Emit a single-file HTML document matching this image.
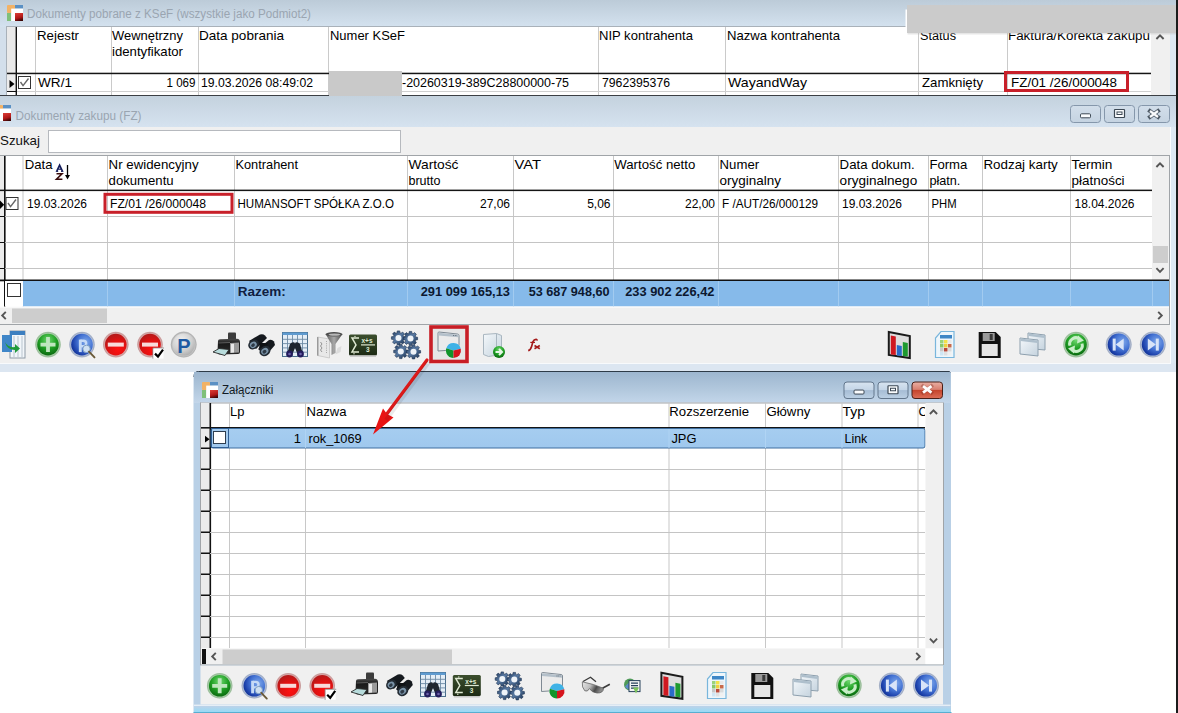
<!DOCTYPE html><html><head><meta charset="utf-8"><title>Dokumenty</title><style>html,body{margin:0;padding:0;background:#fff;overflow:hidden}svg{display:block;font-family:"Liberation Sans",sans-serif}</style></head><body><svg width="1178" height="713" viewBox="0 0 1178 713" font-family="Liberation Sans, sans-serif"><defs><linearGradient id="tb1" x1="0" y1="0" x2="0" y2="1"><stop offset="0" stop-color="#bccbd8"/><stop offset="1" stop-color="#d4e2ef"/></linearGradient><linearGradient id="tb2" x1="0" y1="0" x2="0" y2="1"><stop offset="0" stop-color="#c4d2de"/><stop offset="1" stop-color="#d6e3f0"/></linearGradient><linearGradient id="dlgtb" x1="0" y1="0" x2="0" y2="1"><stop offset="0" stop-color="#9db6cf"/><stop offset="0.6" stop-color="#b3c9de"/><stop offset="1" stop-color="#c3d6ea"/></linearGradient><linearGradient id="btni" x1="0" y1="0" x2="0" y2="1"><stop offset="0" stop-color="#d2deea"/><stop offset="1" stop-color="#c5d3e1"/></linearGradient><linearGradient id="btnd" x1="0" y1="0" x2="0" y2="1"><stop offset="0" stop-color="#d8e4f0"/><stop offset="0.48" stop-color="#c4d5e7"/><stop offset="0.52" stop-color="#a6bdd5"/><stop offset="1" stop-color="#bcd0e4"/></linearGradient><linearGradient id="close" x1="0" y1="0" x2="0" y2="1"><stop offset="0" stop-color="#eab0a4"/><stop offset="0.45" stop-color="#d88070"/><stop offset="0.5" stop-color="#c5442c"/><stop offset="1" stop-color="#dc6f58"/></linearGradient><linearGradient id="dlgbot" x1="0" y1="0" x2="0" y2="1"><stop offset="0" stop-color="#bdd2e8"/><stop offset="1" stop-color="#98daf6"/></linearGradient><linearGradient id="sel" x1="0" y1="0" x2="0" y2="1"><stop offset="0" stop-color="#a6cdf0"/><stop offset="1" stop-color="#9fc8ee"/></linearGradient><clipPath id="clipC"><rect x="900" y="400" width="25" height="30"/></clipPath>
<radialGradient id="gGreen" cx="0.5" cy="0.3" r="0.7"><stop offset="0" stop-color="#6fd86f"/><stop offset="0.55" stop-color="#1f9f24"/><stop offset="1" stop-color="#0b6a10"/></radialGradient>
<radialGradient id="gBlue" cx="0.68" cy="0.38" r="0.78"><stop offset="0" stop-color="#7fa8ea"/><stop offset="0.45" stop-color="#4574d4"/><stop offset="0.8" stop-color="#1c40aa"/><stop offset="1" stop-color="#0b2a86"/></radialGradient>
<radialGradient id="gRed" cx="0.6" cy="0.72" r="0.8"><stop offset="0" stop-color="#ff1010"/><stop offset="0.55" stop-color="#dc1212"/><stop offset="1" stop-color="#a81c1c"/></radialGradient>
<radialGradient id="gGray" cx="0.4" cy="0.3" r="0.8"><stop offset="0" stop-color="#f0f0f0"/><stop offset="0.6" stop-color="#cfcfcf"/><stop offset="1" stop-color="#a5a5a5"/></radialGradient>
<linearGradient id="gRing" x1="0" y1="0" x2="0" y2="1"><stop offset="0" stop-color="#d6d6d6"/><stop offset="1" stop-color="#a8a8a8"/></linearGradient>
<linearGradient id="gBlack" x1="0" y1="0" x2="0" y2="1"><stop offset="0" stop-color="#5a5a5a"/><stop offset="1" stop-color="#0c0c0c"/></linearGradient>
<linearGradient id="gPale" x1="0" y1="0" x2="1" y2="1"><stop offset="0" stop-color="#f4f8fb"/><stop offset="1" stop-color="#c5d3de"/></linearGradient>
<linearGradient id="gSigma" x1="0" y1="0" x2="0" y2="1"><stop offset="0" stop-color="#3c4f2e"/><stop offset="1" stop-color="#1c2a14"/></linearGradient>
<linearGradient id="gSteel" x1="0" y1="0" x2="1" y2="1"><stop offset="0" stop-color="#1d3558"/><stop offset="0.45" stop-color="#5a7ba4"/><stop offset="1" stop-color="#183050"/></linearGradient>
<linearGradient id="gAppRed" x1="0.3" y1="0" x2="0.6" y2="1"><stop offset="0" stop-color="#d83a34"/><stop offset="0.6" stop-color="#b01818"/><stop offset="1" stop-color="#3a0505"/></linearGradient>
<linearGradient id="gPrn" x1="0" y1="0" x2="0" y2="1"><stop offset="0" stop-color="#4a4a4a"/><stop offset="0.3" stop-color="#1a1a1a"/><stop offset="1" stop-color="#2a2a2a"/></linearGradient>
<linearGradient id="gGlass" x1="0" y1="0" x2="1" y2="0.3"><stop offset="0" stop-color="#e6e6e6"/><stop offset="0.45" stop-color="#bdbdbd"/><stop offset="0.75" stop-color="#4a4a4a"/><stop offset="1" stop-color="#8a8a8a"/></linearGradient>
<linearGradient id="gFun" x1="0" y1="0" x2="1" y2="0"><stop offset="0" stop-color="#5a5a5a"/><stop offset="0.5" stop-color="#a8a8a8"/><stop offset="1" stop-color="#4a4a4a"/></linearGradient>
</defs><rect x="0" y="0" width="1178" height="713" fill="#ffffff" />
<rect x="0" y="0" width="1178" height="96" fill="#d3dfeb" />
<rect x="0" y="0" width="1178" height="27" fill="url(#tb1)" />
<g transform="translate(7,5) scale(1.0)"><rect x="0" y="0" width="8" height="8" rx="1" fill="#f2b266"/><rect x="8" y="0" width="8" height="3.6" fill="#5a90c4"/><rect x="0" y="8" width="4.2" height="8" fill="#7fc07a"/><rect x="4.2" y="3.6" width="11.8" height="12.4" fill="#ffffff"/><rect x="8" y="8" width="8" height="8" fill="url(#gAppRed)"/></g>
<text x="27" y="18" font-size="12" fill="#9aa5b1" font-weight="normal" text-anchor="start" textLength="284" lengthAdjust="spacingAndGlyphs" >Dokumenty pobrane z KSeF (wszystkie jako Podmiot2)</text>
<rect x="6" y="26" width="1164" height="69" fill="#ffffff" />
<rect x="6" y="26" width="1164" height="1" fill="#a9b1b9" />
<rect x="6" y="26" width="1" height="69" fill="#a9b1b9" />
<rect x="7" y="27" width="9" height="46" fill="#e9e9e9" />
<rect x="7" y="74" width="9" height="17" fill="#ececec" />
<rect x="15.6" y="27" width="1.4" height="68" fill="#111" />
<rect x="35" y="27" width="1" height="68" fill="#cacaca" />
<rect x="111" y="27" width="1" height="68" fill="#cacaca" />
<rect x="198" y="27" width="1" height="68" fill="#cacaca" />
<rect x="328" y="27" width="1" height="68" fill="#cacaca" />
<rect x="598" y="27" width="1" height="68" fill="#cacaca" />
<rect x="725" y="27" width="1" height="68" fill="#cacaca" />
<rect x="918" y="27" width="1" height="68" fill="#cacaca" />
<rect x="1007" y="27" width="1" height="68" fill="#cacaca" />
<rect x="7" y="72.7" width="1144" height="1.5" fill="#151515" />
<rect x="17" y="91" width="1134" height="1" fill="#cfcfcf" />
<rect x="7" y="91" width="9" height="1" fill="#111" />
<rect x="1151" y="27" width="19" height="68" fill="#f0f0f0" />
<path d="M1156.4 39 L1160 35.4 L1163.6 39" fill="none" stroke="#555" stroke-width="1.9"/>
<rect x="0" y="95" width="1176" height="1" fill="#3b3f44" />
<rect x="1170" y="27" width="6" height="68" fill="#dde8f2" />
<path d="M9.5 80 L14.5 84 L9.5 88 Z" fill="#000"/>
<rect x="18.5" y="76.5" width="12" height="12" fill="#fff" stroke="#333" stroke-width="1"/><path d="M20.5 82.0 L23.04 85.6 L28.5 78.5" fill="none" stroke="#666" stroke-width="1.4"/>
<text x="37" y="40" font-size="13" fill="#000" font-weight="normal" text-anchor="start" textLength="42" lengthAdjust="spacingAndGlyphs" >Rejestr</text>
<text x="112" y="40" font-size="13" fill="#000" font-weight="normal" text-anchor="start" textLength="71" lengthAdjust="spacingAndGlyphs" >Wewnętrzny</text>
<text x="112" y="56" font-size="13" fill="#000" font-weight="normal" text-anchor="start" textLength="71" lengthAdjust="spacingAndGlyphs" >identyfikator</text>
<text x="199" y="40" font-size="13" fill="#000" font-weight="normal" text-anchor="start" textLength="85" lengthAdjust="spacingAndGlyphs" >Data pobrania</text>
<text x="330" y="40" font-size="13" fill="#000" font-weight="normal" text-anchor="start" textLength="75" lengthAdjust="spacingAndGlyphs" >Numer KSeF</text>
<text x="599" y="40" font-size="13" fill="#000" font-weight="normal" text-anchor="start" textLength="94" lengthAdjust="spacingAndGlyphs" >NIP kontrahenta</text>
<text x="727" y="40" font-size="13" fill="#000" font-weight="normal" text-anchor="start" textLength="113" lengthAdjust="spacingAndGlyphs" >Nazwa kontrahenta</text>
<text x="920" y="40" font-size="13" fill="#000" font-weight="normal" text-anchor="start" textLength="36" lengthAdjust="spacingAndGlyphs" >Status</text>
<text x="1008" y="40" font-size="13" fill="#000" font-weight="normal" text-anchor="start" textLength="142" lengthAdjust="spacingAndGlyphs" >Faktura/Korekta zakupu</text>
<text x="38" y="87" font-size="13" fill="#000" font-weight="normal" text-anchor="start" textLength="34" lengthAdjust="spacingAndGlyphs" >WR/1</text>
<text x="195.5" y="87" font-size="12.5" fill="#000" font-weight="normal" text-anchor="end" textLength="29" lengthAdjust="spacingAndGlyphs" >1 069</text>
<text x="201" y="87" font-size="12.5" fill="#000" font-weight="normal" text-anchor="start" textLength="112" lengthAdjust="spacingAndGlyphs" >19.03.2026 08:49:02</text>
<text x="402" y="87" font-size="12.5" fill="#000" font-weight="normal" text-anchor="start" textLength="167" lengthAdjust="spacingAndGlyphs" >-20260319-389C28800000-75</text>
<text x="602" y="87" font-size="12.5" fill="#000" font-weight="normal" text-anchor="start" textLength="68" lengthAdjust="spacingAndGlyphs" >7962395376</text>
<text x="728" y="87" font-size="13" fill="#000" font-weight="normal" text-anchor="start" textLength="79" lengthAdjust="spacingAndGlyphs" >WayandWay</text>
<text x="922" y="87" font-size="13" fill="#000" font-weight="normal" text-anchor="start" textLength="61" lengthAdjust="spacingAndGlyphs" >Zamknięty</text>
<text x="1011" y="87" font-size="12.5" fill="#000" font-weight="normal" text-anchor="start" textLength="106" lengthAdjust="spacingAndGlyphs" >FZ/01 /26/000048</text>
<rect x="1005.5" y="72.5" width="122" height="18" fill="none" stroke="#c8202a" stroke-width="3"/>
<rect x="329" y="71" width="73" height="25" fill="#c9c9c9" />
<rect x="907.5" y="6" width="270" height="28.5" fill="#b8b8b8" opacity="0.35"/>
<rect x="905.5" y="9.5" width="1.6" height="21.5" fill="#ffffff" />
<rect x="907" y="5" width="269.5" height="28" fill="#cbcbcb" />
<rect x="0" y="96" width="1178" height="276" fill="#d6e2ee" />
<rect x="0" y="96" width="1178" height="32" fill="url(#tb2)" />
<g transform="translate(-5,105) scale(1.0)"><rect x="0" y="0" width="8" height="8" rx="1" fill="#f2b266"/><rect x="8" y="0" width="8" height="3.6" fill="#5a90c4"/><rect x="0" y="8" width="4.2" height="8" fill="#7fc07a"/><rect x="4.2" y="3.6" width="11.8" height="12.4" fill="#ffffff"/><rect x="8" y="8" width="8" height="8" fill="url(#gAppRed)"/></g>
<text x="15.5" y="119.5" font-size="12" fill="#9aa5b1" font-weight="normal" text-anchor="start" textLength="126" lengthAdjust="spacingAndGlyphs" >Dokumenty zakupu (FZ)</text>
<rect x="1070.5" y="105.5" width="30" height="17" rx="3" fill="url(#btni)" stroke="#8597ab" stroke-width="1"/>
<rect x="1080.5" y="113.8" width="10" height="4" rx="1" fill="#fafcfe" stroke="#3c4854" stroke-width="1"/>
<rect x="1104.5" y="105.5" width="30" height="17" rx="3" fill="url(#btni)" stroke="#8597ab" stroke-width="1"/>
<rect x="1114.5" y="109.5" width="10" height="8" rx="0.5" fill="#fafcfe" stroke="#3c4854" stroke-width="1.2"/>
<rect x="1117.0" y="112.0" width="5" height="2.5" fill="#fafcfe" stroke="#3c4854" stroke-width="1"/>
<rect x="1138.5" y="105.5" width="31" height="17" rx="3" fill="url(#btni)" stroke="#8597ab" stroke-width="1"/>
<path d="M1150.0 111.0 L1158.0 117.0 M1158.0 111.0 L1150.0 117.0" stroke="#4e5a66" stroke-width="4" stroke-linecap="square"/>
<path d="M1150.0 111.0 L1158.0 117.0 M1158.0 111.0 L1150.0 117.0" stroke="#fbfcfd" stroke-width="2.2" stroke-linecap="butt"/>
<rect x="0" y="127" width="1170" height="237" fill="#f0f0f0" />
<rect x="1170" y="127" width="1" height="236" fill="#fafcfe" />
<rect x="1171" y="127" width="5" height="245" fill="#dde8f2" />
<text x="0" y="145" font-size="13.3" fill="#111" font-weight="normal" text-anchor="start" textLength="40" lengthAdjust="spacingAndGlyphs" >Szukaj</text>
<rect x="48.5" y="130.5" width="352" height="22" fill="#fff" stroke="#b6b9be"/>
<rect x="0" y="155" width="1170" height="152" fill="#ffffff" />
<rect x="0" y="155" width="1170" height="1" fill="#a0a4a8" />
<rect x="1169" y="155" width="1" height="169" fill="#a0a4a8" />
<rect x="0" y="156" width="4" height="124" fill="#ebebeb" />
<rect x="4" y="156" width="1.6" height="151" fill="#111" />
<rect x="22.5" y="156" width="1" height="151" fill="#c8c8c8" />
<rect x="107.0" y="156" width="1" height="151" fill="#c8c8c8" />
<rect x="234.0" y="156" width="1" height="151" fill="#c8c8c8" />
<rect x="407.0" y="156" width="1" height="151" fill="#c8c8c8" />
<rect x="513.0" y="156" width="1" height="151" fill="#c8c8c8" />
<rect x="613.0" y="156" width="1" height="151" fill="#c8c8c8" />
<rect x="718.0" y="156" width="1" height="151" fill="#c8c8c8" />
<rect x="838.0" y="156" width="1" height="151" fill="#c8c8c8" />
<rect x="928.0" y="156" width="1" height="151" fill="#c8c8c8" />
<rect x="982.0" y="156" width="1" height="151" fill="#c8c8c8" />
<rect x="1070.0" y="156" width="1" height="151" fill="#c8c8c8" />
<rect x="0" y="189.6" width="1152" height="1.5" fill="#151515" />
<rect x="5" y="216" width="1147" height="1" fill="#c4c4c4" />
<rect x="0" y="216" width="5" height="1" fill="#111" />
<rect x="5" y="242" width="1147" height="1" fill="#c4c4c4" />
<rect x="0" y="242" width="5" height="1" fill="#111" />
<rect x="5" y="268" width="1147" height="1" fill="#c4c4c4" />
<rect x="0" y="268" width="5" height="1" fill="#111" />
<rect x="1152" y="156" width="17" height="124" fill="#f0f0f0" />
<path d="M1156.4 167 L1160 163.4 L1163.6 167" fill="none" stroke="#555" stroke-width="1.9"/>
<rect x="1153" y="246" width="15" height="17" fill="#cdcdcd" />
<path d="M1156.4 268.2 L1160 271.8 L1163.6 268.2" fill="none" stroke="#555" stroke-width="1.9"/>
<rect x="0" y="279.5" width="1169" height="1.8" fill="#111" />
<rect x="23" y="281" width="1146" height="25.5" fill="#86baea" />
<rect x="5" y="281" width="18" height="25.5" fill="#ffffff" />
<rect x="107.0" y="281" width="1" height="25.5" fill="#a2cbf0" />
<rect x="234.0" y="281" width="1" height="25.5" fill="#a2cbf0" />
<rect x="407.0" y="281" width="1" height="25.5" fill="#a2cbf0" />
<rect x="513.0" y="281" width="1" height="25.5" fill="#a2cbf0" />
<rect x="613.0" y="281" width="1" height="25.5" fill="#a2cbf0" />
<rect x="718.0" y="281" width="1" height="25.5" fill="#a2cbf0" />
<rect x="838.0" y="281" width="1" height="25.5" fill="#a2cbf0" />
<rect x="928.0" y="281" width="1" height="25.5" fill="#a2cbf0" />
<rect x="982.0" y="281" width="1" height="25.5" fill="#a2cbf0" />
<rect x="1070.0" y="281" width="1" height="25.5" fill="#a2cbf0" />
<rect x="1152" y="281" width="1" height="25.5" fill="#a2cbf0" />
<rect x="7.5" y="283.5" width="13" height="13" fill="#fff" stroke="#333" stroke-width="1"/>
<path d="M0 200.5 L4.2 204.7 L0 208.9 Z" fill="#000"/>
<rect x="6.0" y="197.5" width="12" height="12" fill="#fff" stroke="#333" stroke-width="1"/><path d="M8.0 203.0 L10.54 206.6 L16.0 199.5" fill="none" stroke="#666" stroke-width="1.4"/>
<text x="27" y="207.5" font-size="12" fill="#000" font-weight="normal" text-anchor="start" textLength="60" lengthAdjust="spacingAndGlyphs" >19.03.2026</text>
<text x="110" y="207.5" font-size="12" fill="#000" font-weight="normal" text-anchor="start" textLength="96" lengthAdjust="spacingAndGlyphs" >FZ/01 /26/000048</text>
<text x="237.5" y="207.5" font-size="12" fill="#000" font-weight="normal" text-anchor="start" textLength="156.5" lengthAdjust="spacingAndGlyphs" >HUMANSOFT SPÓŁKA Z.O.O</text>
<text x="510" y="207.5" font-size="12" fill="#000" font-weight="normal" text-anchor="end" >27,06</text>
<text x="610.5" y="207.5" font-size="12" fill="#000" font-weight="normal" text-anchor="end" >5,06</text>
<text x="715" y="207.5" font-size="12" fill="#000" font-weight="normal" text-anchor="end" >22,00</text>
<text x="722" y="207.5" font-size="12" fill="#000" font-weight="normal" text-anchor="start" textLength="96" lengthAdjust="spacingAndGlyphs" >F /AUT/26/000129</text>
<text x="842" y="207.5" font-size="12" fill="#000" font-weight="normal" text-anchor="start" textLength="60" lengthAdjust="spacingAndGlyphs" >19.03.2026</text>
<text x="931.5" y="207.5" font-size="12" fill="#000" font-weight="normal" text-anchor="start" textLength="25" lengthAdjust="spacingAndGlyphs" >PHM</text>
<text x="1074.5" y="207.5" font-size="12" fill="#000" font-weight="normal" text-anchor="start" textLength="60" lengthAdjust="spacingAndGlyphs" >18.04.2026</text>
<rect x="105" y="194.3" width="127" height="18" fill="none" stroke="#c8202a" stroke-width="3"/>
<text x="24.7" y="169.2" font-size="13" fill="#000" font-weight="normal" text-anchor="start" textLength="27.8" lengthAdjust="spacingAndGlyphs" >Data</text>
<g transform="translate(0,0)"><path d="M56.8 171.2 L59.6 165.2 L62.4 171.2" fill="none" stroke="#141c5a" stroke-width="1.7"/><path d="M58.2 169.2 H61" stroke="#141c5a" stroke-width="1.2"/><path d="M55.8 171.4 H58.2 M61 171.4 H63.4" stroke="#141c5a" stroke-width="1"/><path d="M56.5 173.8 H62 L56.5 179.2 H62.4" fill="none" stroke="#3a0c0c" stroke-width="1.6"/><path d="M67.5 165 V176" stroke="#000" stroke-width="1.3"/><path d="M65 175 H70 L67.5 179.6 Z" fill="#000"/></g>
<text x="108.6" y="169.2" font-size="13" fill="#000" font-weight="normal" text-anchor="start" textLength="90" lengthAdjust="spacingAndGlyphs" >Nr ewidencyjny</text>
<text x="108.6" y="184.5" font-size="13" fill="#000" font-weight="normal" text-anchor="start" textLength="65" lengthAdjust="spacingAndGlyphs" >dokumentu</text>
<text x="235.5" y="169.2" font-size="13" fill="#000" font-weight="normal" text-anchor="start" textLength="62.5" lengthAdjust="spacingAndGlyphs" >Kontrahent</text>
<text x="408.5" y="169.2" font-size="13" fill="#000" font-weight="normal" text-anchor="start" textLength="50" lengthAdjust="spacingAndGlyphs" >Wartość</text>
<text x="408.5" y="184.5" font-size="13" fill="#000" font-weight="normal" text-anchor="start" textLength="32" lengthAdjust="spacingAndGlyphs" >brutto</text>
<text x="514.5" y="169.2" font-size="13" fill="#000" font-weight="normal" text-anchor="start" textLength="26.5" lengthAdjust="spacingAndGlyphs" >VAT</text>
<text x="614.3" y="169.2" font-size="13" fill="#000" font-weight="normal" text-anchor="start" textLength="81" lengthAdjust="spacingAndGlyphs" >Wartość netto</text>
<text x="719.6" y="169.2" font-size="13" fill="#000" font-weight="normal" text-anchor="start" textLength="39.5" lengthAdjust="spacingAndGlyphs" >Numer</text>
<text x="719.6" y="184.5" font-size="13" fill="#000" font-weight="normal" text-anchor="start" textLength="61.4" lengthAdjust="spacingAndGlyphs" >oryginalny</text>
<text x="839.6" y="169.2" font-size="13" fill="#000" font-weight="normal" text-anchor="start" textLength="75" lengthAdjust="spacingAndGlyphs" >Data dokum.</text>
<text x="839.6" y="184.5" font-size="13" fill="#000" font-weight="normal" text-anchor="start" textLength="77.6" lengthAdjust="spacingAndGlyphs" >oryginalnego</text>
<text x="929.4" y="169.2" font-size="13" fill="#000" font-weight="normal" text-anchor="start" textLength="38" lengthAdjust="spacingAndGlyphs" >Forma</text>
<text x="929.4" y="184.5" font-size="13" fill="#000" font-weight="normal" text-anchor="start" textLength="31" lengthAdjust="spacingAndGlyphs" >płatn.</text>
<text x="983.4" y="169.2" font-size="13" fill="#000" font-weight="normal" text-anchor="start" textLength="74.4" lengthAdjust="spacingAndGlyphs" >Rodzaj karty</text>
<text x="1071.6" y="169.2" font-size="13" fill="#000" font-weight="normal" text-anchor="start" textLength="40.8" lengthAdjust="spacingAndGlyphs" >Termin</text>
<text x="1071.6" y="184.5" font-size="13" fill="#000" font-weight="normal" text-anchor="start" textLength="53" lengthAdjust="spacingAndGlyphs" >płatności</text>
<text x="237.7" y="296" font-size="13" fill="#102040" font-weight="bold" text-anchor="start" textLength="48" lengthAdjust="spacingAndGlyphs" >Razem:</text>
<text x="510" y="296" font-size="13" fill="#0c1830" font-weight="bold" text-anchor="end" textLength="89.3" lengthAdjust="spacingAndGlyphs" >291 099 165,13</text>
<text x="609.5" y="296" font-size="13" fill="#0c1830" font-weight="bold" text-anchor="end" textLength="80.8" lengthAdjust="spacingAndGlyphs" >53 687 948,60</text>
<text x="714.5" y="296" font-size="13" fill="#0c1830" font-weight="bold" text-anchor="end" textLength="89.3" lengthAdjust="spacingAndGlyphs" >233 902 226,42</text>
<rect x="0" y="307" width="1169" height="17" fill="#f0f0f0" />
<rect x="0" y="306.5" width="1169" height="1.2" fill="#fbfbfb" />
<rect x="12" y="308.5" width="95" height="14.5" fill="#cdcdcd" />
<path d="M5.8 311.9 L2.2 315.5 L5.8 319.1" fill="none" stroke="#555" stroke-width="1.9"/>
<path d="M1158.2 311.9 L1161.8 315.5 L1158.2 319.1" fill="none" stroke="#555" stroke-width="1.9"/>
<rect x="0" y="324" width="1170" height="1" fill="#a0a4a8" />
<rect x="0" y="325" width="1170" height="38" fill="#f0f0f0" />
<rect x="0" y="363" width="1176" height="9" fill="#dce6f1" />
<rect x="0" y="363" width="1171" height="1" fill="#f8fafc" />
<path d="M193.5 713 L193.5 376 Q193.5 371 198.5 371 L949 371 L951 373 L951 713 Z" fill="#b9d0e6"/>
<path d="M194.0 377 Q194.0 371.5 198.5 371.5 L949.5 371.5 L950.5 372.5" fill="none" stroke="#2e3b48" stroke-width="1"/>
<rect x="194.0" y="372" width="756.5" height="31" fill="url(#dlgtb)" />
<g transform="translate(202,382) scale(1.0)"><rect x="0" y="0" width="8" height="8" rx="1" fill="#f2b266"/><rect x="8" y="0" width="8" height="3.6" fill="#5a90c4"/><rect x="0" y="8" width="4.2" height="8" fill="#7fc07a"/><rect x="4.2" y="3.6" width="11.8" height="12.4" fill="#ffffff"/><rect x="8" y="8" width="8" height="8" fill="url(#gAppRed)"/></g>
<text x="222" y="394.4" font-size="12" fill="#111a24" font-weight="normal" text-anchor="start" textLength="51.3" lengthAdjust="spacingAndGlyphs" >Załączniki</text>
<rect x="844.0" y="382.0" width="30" height="16.5" rx="3" fill="url(#btnd)" stroke="#62768c" stroke-width="1"/>
<rect x="854.0" y="390.05" width="10" height="4" rx="1" fill="#fafcfe" stroke="#3c4854" stroke-width="1"/>
<rect x="878.0" y="382.0" width="30" height="16.5" rx="3" fill="url(#btnd)" stroke="#62768c" stroke-width="1"/>
<rect x="888.0" y="385.75" width="10" height="8" rx="0.5" fill="#fafcfe" stroke="#3c4854" stroke-width="1.2"/>
<rect x="890.5" y="388.25" width="5" height="2.5" fill="#fafcfe" stroke="#3c4854" stroke-width="1"/>
<rect x="912.0" y="382.0" width="30.5" height="16.5" rx="3" fill="url(#close)" stroke="#4a2018" stroke-width="1"/>
<path d="M923.05 386.05 L931.45 392.65000000000003 M931.45 386.05 L923.05 392.65000000000003" stroke="#7a2a1e" stroke-width="3.6" stroke-linecap="square" opacity="0.35"/>
<path d="M923.05 386.05 L931.45 392.65000000000003 M931.45 386.05 L923.05 392.65000000000003" stroke="#fdfdfd" stroke-width="2.8" stroke-linecap="butt"/>
<rect x="200" y="402.5" width="743" height="262" fill="#ffffff" />
<rect x="200" y="402.5" width="743" height="1" fill="#a0a4a8" />
<rect x="200" y="402.5" width="1" height="262.5" fill="#a0a4a8" />
<rect x="201" y="403" width="9" height="245" fill="#ebebeb" />
<rect x="209.5" y="403" width="1.6" height="245" fill="#111" />
<rect x="229" y="403" width="1" height="245" fill="#c8c8c8" />
<rect x="305" y="403" width="1" height="245" fill="#c8c8c8" />
<rect x="668.5" y="403" width="1" height="245" fill="#c8c8c8" />
<rect x="765" y="403" width="1" height="245" fill="#c8c8c8" />
<rect x="841.5" y="403" width="1" height="245" fill="#c8c8c8" />
<rect x="917.5" y="403" width="1" height="245" fill="#c8c8c8" />
<rect x="201" y="427" width="724" height="1.6" fill="#151515" />
<rect x="211" y="428.5" width="714" height="19.5" rx="2" fill="url(#sel)" stroke="#3f6fa0" stroke-width="1"/>
<rect x="305" y="429" width="1" height="19" fill="#b0d4f4" />
<rect x="668.5" y="429" width="1" height="19" fill="#b0d4f4" />
<rect x="765" y="429" width="1" height="19" fill="#b0d4f4" />
<rect x="841.5" y="429" width="1" height="19" fill="#b0d4f4" />
<rect x="210" y="469" width="715" height="1" fill="#c4c4c4" />
<rect x="201" y="468.5" width="9" height="1.5" fill="#111" />
<rect x="210" y="490" width="715" height="1" fill="#c4c4c4" />
<rect x="201" y="489.5" width="9" height="1.5" fill="#111" />
<rect x="210" y="511" width="715" height="1" fill="#c4c4c4" />
<rect x="201" y="510.5" width="9" height="1.5" fill="#111" />
<rect x="210" y="532" width="715" height="1" fill="#c4c4c4" />
<rect x="201" y="531.5" width="9" height="1.5" fill="#111" />
<rect x="210" y="553" width="715" height="1" fill="#c4c4c4" />
<rect x="201" y="552.5" width="9" height="1.5" fill="#111" />
<rect x="210" y="574" width="715" height="1" fill="#c4c4c4" />
<rect x="201" y="573.5" width="9" height="1.5" fill="#111" />
<rect x="210" y="595" width="715" height="1" fill="#c4c4c4" />
<rect x="201" y="594.5" width="9" height="1.5" fill="#111" />
<rect x="210" y="616" width="715" height="1" fill="#c4c4c4" />
<rect x="201" y="615.5" width="9" height="1.5" fill="#111" />
<rect x="210" y="637" width="715" height="1" fill="#c4c4c4" />
<rect x="201" y="636.5" width="9" height="1.5" fill="#111" />
<rect x="201" y="447.5" width="9" height="1.5" fill="#111" />
<path d="M205 435.8 L209.6 439.2 L205 442.6 Z" fill="#000"/>
<rect x="211.5" y="428.5" width="17" height="19" fill="none" stroke="#2f5f96" stroke-width="1"/>
<rect x="213.5" y="431.5" width="12" height="12" fill="#fff" stroke="#2e3e50" stroke-width="1"/>
<text x="230" y="416" font-size="13" fill="#000" font-weight="normal" text-anchor="start" textLength="14.4" lengthAdjust="spacingAndGlyphs" >Lp</text>
<text x="306.5" y="416" font-size="13" fill="#000" font-weight="normal" text-anchor="start" textLength="40" lengthAdjust="spacingAndGlyphs" >Nazwa</text>
<text x="669.3" y="416" font-size="13" fill="#000" font-weight="normal" text-anchor="start" textLength="79.8" lengthAdjust="spacingAndGlyphs" >Rozszerzenie</text>
<text x="766.4" y="416" font-size="13" fill="#000" font-weight="normal" text-anchor="start" textLength="43.9" lengthAdjust="spacingAndGlyphs" >Główny</text>
<text x="842.5" y="416" font-size="13" fill="#000" font-weight="normal" text-anchor="start" textLength="22.4" lengthAdjust="spacingAndGlyphs" >Typ</text>
<text x="918.6" y="416" font-size="13" fill="#000" font-weight="normal" text-anchor="start" textLength="9" lengthAdjust="spacingAndGlyphs" clip-path="url(#clipC)">C</text>
<text x="301" y="442.6" font-size="13" fill="#000" font-weight="normal" text-anchor="end" >1</text>
<text x="308.4" y="442.6" font-size="13" fill="#000" font-weight="normal" text-anchor="start" textLength="53.3" lengthAdjust="spacingAndGlyphs" >rok_1069</text>
<text x="671.4" y="442.6" font-size="13" fill="#000" font-weight="normal" text-anchor="start" textLength="25.1" lengthAdjust="spacingAndGlyphs" >JPG</text>
<text x="844.6" y="442.6" font-size="13" fill="#000" font-weight="normal" text-anchor="start" textLength="22.7" lengthAdjust="spacingAndGlyphs" >Link</text>
<rect x="925.5" y="403" width="17.5" height="245.5" fill="#f0f0f0" />
<path d="M929.9 414 L933.5 410.4 L937.1 414" fill="none" stroke="#555" stroke-width="1.9"/>
<path d="M929.9 638.7 L933.5 642.3 L937.1 638.7" fill="none" stroke="#555" stroke-width="1.9"/>
<rect x="201" y="648.5" width="724.5" height="16" fill="#f0f0f0" />
<rect x="925.5" y="648.5" width="17.5" height="16" fill="#ffffff" />
<rect x="202" y="649" width="4" height="15" fill="#111" />
<rect x="222.5" y="649.5" width="229.5" height="14.5" fill="#cdcdcd" />
<path d="M215.8 652.9 L212.2 656.5 L215.8 660.1" fill="none" stroke="#555" stroke-width="1.9"/>
<path d="M916.2 652.9 L919.8 656.5 L916.2 660.1" fill="none" stroke="#555" stroke-width="1.9"/>
<rect x="200" y="664.5" width="743" height="1" fill="#a0a4a8" />
<rect x="943" y="402.5" width="1" height="262.5" fill="#a0a4a8" />
<rect x="200.5" y="665.5" width="742.5" height="39" fill="#f0f0f0" />
<rect x="194.0" y="704.6" width="756.5" height="1.4" fill="#e6eef6" />
<rect x="194.0" y="706" width="756.5" height="6" fill="url(#dlgbot)" />
<rect x="193.5" y="712" width="758.0" height="1" fill="#58aed0" />
<rect x="1176" y="0" width="2" height="713" fill="#1b1b1b" />
<g transform="translate(2,331)"><rect x="8" y="0" width="15" height="27" fill="#f2f6fa" stroke="#8e9aa6" stroke-width="1"/><rect x="8" y="0" width="15" height="4" fill="#3d7fc0"/><path d="M12 5 V26 M16 5 V26 M20 5 V26" stroke="#b9c4ce" stroke-width="1"/><rect x="0" y="4" width="10" height="17" fill="#3f86c8"/><path d="M3 11 Q6 17 13 16 L13 13 L18 17.5 L13 22 L13 19 Q5 19 3 11 Z" fill="#1f9a3a"/></g><circle cx="48" cy="344.6" r="12.8" fill="#a6cfa6"/><circle cx="48" cy="344.6" r="12.200000000000001" fill="none" stroke="#8a8a8a" stroke-width="0.6" opacity="0.5"/><circle cx="48" cy="344.6" r="10.8" fill="url(#gGreen)"/><path d="M40.5 344.6 L55.5 344.6 M48 337.1 L48 352.1" stroke="#bfe6bf" stroke-width="3.8"/><circle cx="82" cy="344.6" r="12.8" fill="#aebcd8"/><circle cx="82" cy="344.6" r="12.200000000000001" fill="none" stroke="#8a8a8a" stroke-width="0.6" opacity="0.5"/><circle cx="82" cy="344.6" r="10.8" fill="url(#gBlue)"/><path d="M80.3 352.1 V339.6" stroke="#c6daf6" stroke-width="2.9"/><path d="M80.3 340.70000000000005 H83.3 Q86.2 340.70000000000005 86.2 343.40000000000003 Q86.2 346.20000000000005 83.3 346.20000000000005 H80.3" fill="none" stroke="#c6daf6" stroke-width="2.4"/><circle cx="86.5" cy="348.90000000000003" r="3.7" fill="#cfe0f2" stroke="#7f9fc2" stroke-width="1"/><path d="M89 351.6 L94.5 357.40000000000003" stroke="#6a5a38" stroke-width="1.9" stroke-linecap="round"/><circle cx="115.8" cy="344.6" r="12.8" fill="#dca6a6"/><circle cx="115.8" cy="344.6" r="12.200000000000001" fill="none" stroke="#8a8a8a" stroke-width="0.6" opacity="0.5"/><circle cx="115.8" cy="344.6" r="10.8" fill="url(#gRed)"/><rect x="107.8" y="342.6" width="16" height="4" fill="#f8dada"/><circle cx="150" cy="344.6" r="12.8" fill="#dca6a6"/><circle cx="150" cy="344.6" r="12.200000000000001" fill="none" stroke="#8a8a8a" stroke-width="0.6" opacity="0.5"/><circle cx="150" cy="344.6" r="10.8" fill="url(#gRed)"/><rect x="142" y="342.6" width="16" height="4" fill="#f8dada"/><path d="M153 358.6 L153 348.1 L164 348.1" fill="#fff" stroke="#8a8a8a" stroke-width="1"/><rect x="153.5" y="348.6" width="10" height="10" fill="#fff"/><path d="M155 353.6 L158 356.6 L163 349.6" fill="none" stroke="#000" stroke-width="2.2"/><circle cx="183.7" cy="344.6" r="13.0" fill="#c4c4c4"/><circle cx="183.7" cy="344.6" r="12.4" fill="none" stroke="#8a8a8a" stroke-width="0.6" opacity="0.5"/><circle cx="183.7" cy="344.6" r="11.0" fill="url(#gGray)"/><text x="177.2" y="352.6" font-size="20" font-weight="bold" fill="#1f5aa2">P</text><g transform="translate(208,328)"><path d="M20 5.5 Q20 4.5 21 4.5 L27 4.5 Q28 4.5 28 5.5 L28 12 L20 12 Z" fill="#3c3c3c"/><path d="M10 13 Q10 11.5 12 11.3 L29 10.8 Q32 11 32 14 L32 24 Q32 26 30 26 L12 26.5 Q9.5 26.5 9.5 24 Z" fill="url(#gPrn)"/><path d="M22 15 L31 14.5 L31 24.5 L22 25 Z" fill="#9a9a9a"/><path d="M23 16 L26 15.8 L26 24.5 L23 24.7 Z" fill="#e8e8e8"/><path d="M10.5 15 L22 14.5" stroke="#6a6a6a" stroke-width="0.8"/><path d="M5 24 L11 20.5 L21 21.5 L17 27.5 Z" fill="#b8dcdc" stroke="#2a2a2a" stroke-width="0.9"/></g><g transform="translate(208.0,328)"><path d="M41 13 L52 6.5 Q55 5.5 57 7.5 L59 10 L48 21 Z" fill="#15191e"/><path d="M50 21 L61 12 Q64 11 66 13.5 L67 17 L58 27.5 Z" fill="#15191e"/><path d="M52 15 L60 15 L58 20 L51 20 Z" fill="#0f1215"/><ellipse cx="45.5" cy="16.5" rx="5.5" ry="4.6" transform="rotate(-35 45.5 16.5)" fill="#222a32"/><ellipse cx="45.3" cy="16.8" rx="3.6" ry="3" transform="rotate(-35 45.3 16.8)" fill="#7a93a8"/><ellipse cx="45" cy="17.2" rx="2" ry="1.6" transform="rotate(-35 45 17.2)" fill="#2e3a46"/><ellipse cx="57" cy="23" rx="5.8" ry="4.8" transform="rotate(-35 57 23)" fill="#222a32"/><ellipse cx="56.8" cy="23.3" rx="3.8" ry="3.1" transform="rotate(-35 56.8 23.3)" fill="#7a93a8"/><ellipse cx="56.5" cy="23.7" rx="2.1" ry="1.7" transform="rotate(-35 56.5 23.7)" fill="#2e3a46"/></g><g transform="translate(282,332)"><rect x="0.5" y="0.5" width="25" height="24" fill="#e4eef7" stroke="#4a6e8c" stroke-width="1"/><rect x="0.5" y="0.5" width="25" height="2.5" fill="#5f9bd0"/><path d="M5.5 3 V24.5" stroke="#6d8aa4" stroke-width="0.9"/><path d="M0.5 7.3 H25.5" stroke="#6d8aa4" stroke-width="0.9"/><path d="M10.5 3 V24.5" stroke="#6d8aa4" stroke-width="0.9"/><path d="M0.5 11.6 H25.5" stroke="#6d8aa4" stroke-width="0.9"/><path d="M15.5 3 V24.5" stroke="#6d8aa4" stroke-width="0.9"/><path d="M0.5 15.899999999999999 H25.5" stroke="#6d8aa4" stroke-width="0.9"/><path d="M20.5 3 V24.5" stroke="#6d8aa4" stroke-width="0.9"/><path d="M0.5 20.2 H25.5" stroke="#6d8aa4" stroke-width="0.9"/><path d="M5 22 L8 12 Q10 9.5 12.5 10.5 L13 12 L13.5 10.5 Q16 9.5 18 12 L21 22 L15.5 22 L13 16 L10.5 22 Z" fill="#1e2630"/><circle cx="7.5" cy="22" r="3.4" fill="#231c5c"/><circle cx="18.5" cy="22" r="3.4" fill="#231c5c"/><circle cx="7.5" cy="22" r="1.3" fill="#6a62a8"/><circle cx="18.5" cy="22" r="1.3" fill="#6a62a8"/></g><g transform="translate(315.5,331)"><path d="M2 6 L14 8 L14 27 L2 24.5 Z" fill="#e8e8e8" stroke="#c4c4c4" stroke-width="0.8"/><path d="M1.5 6 L3 6.3 L3 24.7 L1.5 24.4 Z" fill="#9a9a9a"/><path d="M5 11 L6.5 13 L5 15 L6.5 17 L5 19 L6.5 21" fill="none" stroke="#8a8a8a" stroke-width="0.9"/><path d="M11 10 V22" stroke="#a0a0a0" stroke-width="0.9" stroke-dasharray="1 1.2"/><path d="M10 3 L27 3 L20 13 L20 22 L16 24 L16 13 Z" fill="url(#gFun)"/><ellipse cx="18.5" cy="3.3" rx="8.5" ry="2.2" fill="#4c4c4c"/><ellipse cx="19" cy="3.6" rx="6" ry="1.2" fill="#b8b8b8"/><path d="M22 17 L26 15 L25 21 L20 23.5 Z" fill="#dcdcdc"/></g><g transform="translate(349,334.4)"><rect x="0" y="0" width="28" height="21" rx="1.5" fill="url(#gSigma)"/><path d="M10 3.5 L3 3.5 L7 10.5 L3 17.5 L10 17.5" fill="none" stroke="#dfe9d2" stroke-width="1.5"/><circle cx="6" cy="2" r="0.7" fill="#dfe9d2"/><circle cx="5" cy="19.3" r="0.7" fill="#dfe9d2"/><path d="M12 10.5 H26" stroke="#dfe9d2" stroke-width="1.2"/><text x="12.5" y="8.5" font-size="6.5" font-weight="bold" fill="#dfe9d2">x+s</text><text x="17" y="17.5" font-size="6.5" font-weight="bold" fill="#dfe9d2">3</text><rect x="1" y="21" width="26" height="1.5" fill="#c8c8c8"/></g><path d="M403.59 336.43 L405.60 336.78 L405.60 339.22 L403.59 339.57 L403.21 340.49 L404.38 342.16 L402.66 343.88 L400.99 342.71 L400.07 343.09 L399.72 345.10 L397.28 345.10 L396.93 343.09 L396.01 342.71 L394.34 343.88 L392.62 342.16 L393.79 340.49 L393.41 339.57 L391.40 339.22 L391.40 336.78 L393.41 336.43 L393.79 335.51 L392.62 333.84 L394.34 332.12 L396.01 333.29 L396.93 332.91 L397.28 330.90 L399.72 330.90 L400.07 332.91 L400.99 333.29 L402.66 332.12 L404.38 333.84 L403.21 335.51 Z" fill="url(#gSteel)" stroke="#1d3350" stroke-width="0.6"/><circle cx="398.5" cy="338" r="3.024" fill="#eef3f8"/><path d="M415.59 336.93 L417.60 337.28 L417.60 339.72 L415.59 340.07 L415.21 340.99 L416.38 342.66 L414.66 344.38 L412.99 343.21 L412.07 343.59 L411.72 345.60 L409.28 345.60 L408.93 343.59 L408.01 343.21 L406.34 344.38 L404.62 342.66 L405.79 340.99 L405.41 340.07 L403.40 339.72 L403.40 337.28 L405.41 336.93 L405.79 336.01 L404.62 334.34 L406.34 332.62 L408.01 333.79 L408.93 333.41 L409.28 331.40 L411.72 331.40 L412.07 333.41 L412.99 333.79 L414.66 332.62 L416.38 334.34 L415.21 336.01 Z" fill="url(#gSteel)" stroke="#1d3350" stroke-width="0.6"/><circle cx="410.5" cy="338.5" r="3.024" fill="#eef3f8"/><path d="M405.89 349.93 L407.90 350.28 L407.90 352.72 L405.89 353.07 L405.51 353.99 L406.68 355.66 L404.96 357.38 L403.29 356.21 L402.37 356.59 L402.02 358.60 L399.58 358.60 L399.23 356.59 L398.31 356.21 L396.64 357.38 L394.92 355.66 L396.09 353.99 L395.71 353.07 L393.70 352.72 L393.70 350.28 L395.71 349.93 L396.09 349.01 L394.92 347.34 L396.64 345.62 L398.31 346.79 L399.23 346.41 L399.58 344.40 L402.02 344.40 L402.37 346.41 L403.29 346.79 L404.96 345.62 L406.68 347.34 L405.51 349.01 Z" fill="url(#gSteel)" stroke="#1d3350" stroke-width="0.6"/><circle cx="400.8" cy="351.5" r="3.024" fill="#eef3f8"/><path d="M418.59 350.23 L420.60 350.58 L420.60 353.02 L418.59 353.37 L418.21 354.29 L419.38 355.96 L417.66 357.68 L415.99 356.51 L415.07 356.89 L414.72 358.90 L412.28 358.90 L411.93 356.89 L411.01 356.51 L409.34 357.68 L407.62 355.96 L408.79 354.29 L408.41 353.37 L406.40 353.02 L406.40 350.58 L408.41 350.23 L408.79 349.31 L407.62 347.64 L409.34 345.92 L411.01 347.09 L411.93 346.71 L412.28 344.70 L414.72 344.70 L415.07 346.71 L415.99 347.09 L417.66 345.92 L419.38 347.64 L418.21 349.31 Z" fill="url(#gSteel)" stroke="#1d3350" stroke-width="0.6"/><circle cx="413.5" cy="351.8" r="3.024" fill="#eef3f8"/><rect x="431" y="327" width="36" height="34.5" fill="#e6e6e6"/><g transform="translate(437,331.5)"><path d="M1 1.5 Q1 0.5 2 0.5 L20.5 2.5 Q22 2.7 22 4 L22 18 L1 19.5 Z" fill="#ebebeb" stroke="#7f8a94" stroke-width="1"/><path d="M1.5 1.2 L21.5 3.3 L21.5 5.8 L1.5 4 Z" fill="#b4c0ca"/><path d="M16 4 H20" stroke="#5d6a76" stroke-width="0.9" stroke-dasharray="1 0.8"/><circle cx="16.5" cy="19" r="7.6" fill="#e8f2f8"/><path d="M16.5 19 L9.3 16.7 A7.5 7.5 0 0 1 23.8 17.3 Z" fill="#3fb2e6"/><path d="M16.5 19 L9.3 16.7 A7.5 7.5 0 0 0 16.5 26.5 Z" fill="#12942a"/><path d="M16.5 19 L23.8 17.3 A7.5 7.5 0 0 1 16.5 26.5 Z" fill="#d6141c"/></g><g transform="translate(482.5,332.5)"><path d="M1 2 L14 1 L19 3 L19 22 L6 24 L1 22 Z" fill="url(#gPale)" stroke="#a9b6c0" stroke-width="1"/><path d="M14 1 L14 21" stroke="#a9b6c0" stroke-width="1"/><circle cx="16.5" cy="19.5" r="6" fill="url(#gGreen)"/><path d="M13 19.5 H19 M16.5 16.5 L19.5 19.5 L16.5 22.5" stroke="#e6f7e6" stroke-width="2" fill="none"/></g><g transform="translate(0,0.0)"><path d="M528.2 350.6 Q530.6 350 531.6 346.5 L533 341.5 Q534 339.2 536.2 339.3 Q537.2 339.5 537 340.6" fill="none" stroke="#a51a1a" stroke-width="1.7"/><path d="M530.3 342.4 H535" stroke="#a51a1a" stroke-width="1.2"/><path d="M534.5 345.5 L539.8 348.8 M539.8 345.5 L534.5 348.8" stroke="#a51a1a" stroke-width="1.6"/></g><g transform="translate(887.8,331)"><path d="M1 1 L22 5 L22 27 L1 24 Z" fill="#dedede" stroke="#1a1a1a" stroke-width="2"/><path d="M3 4.5 L8 5.5 L8 24 L3 23.5 Z" fill="#d01820"/><path d="M9 14 L14 15 L14 25 L9 24.5 Z" fill="#2a6cc8"/><path d="M15 11 L20 12 L20 25.5 L15 25 Z" fill="#1e9a30"/></g><g transform="translate(935,331)"><path d="M6 0.5 L19 0.5 L19 26.5 L0.5 26.5 L0.5 7 Z" fill="#eef6fb" stroke="#79b6dc" stroke-width="1.2"/><rect x="5" y="4" width="12" height="3.5" fill="#3d86c6"/><rect x="5" y="9" width="3.5" height="3.5" fill="#9bd37b"/><rect x="9" y="9" width="3.5" height="3.5" fill="#f2e24a"/><rect x="13" y="9" width="3.5" height="3.5" fill="#e8e8e8"/><rect x="5" y="13" width="3.5" height="3.5" fill="#88c86a"/><rect x="9" y="13" width="3.5" height="3.5" fill="#f0d040"/><rect x="13" y="13" width="3.5" height="3.5" fill="#c86a4a"/><rect x="5" y="17" width="3.5" height="3.5" fill="#c8c8c8"/><rect x="9" y="17" width="3.5" height="3.5" fill="#b84a3a"/><rect x="13" y="17" width="3.5" height="3.5" fill="#dadada"/><rect x="5" y="21" width="3.5" height="3.5" fill="#cfe6f4"/><rect x="9" y="21" width="3.5" height="3.5" fill="#e0e0e0"/><rect x="13" y="21" width="3.5" height="3.5" fill="#f0f0f0"/></g><g transform="translate(978.7,331)"><path d="M0 1 L17 1 L22 6 L22 27 L0 27 Z" fill="#111"/><rect x="4" y="2" width="12" height="8" fill="#9a9a9a"/><rect x="11" y="3" width="3" height="6" fill="#3a3a3a"/><rect x="3" y="13" width="16" height="12" fill="#e4e4e4"/></g><g transform="translate(1019.5,332.5)"><path d="M8.5 0.5 L25.5 2.5 L25.5 17.5 L8.5 16 Z" fill="url(#gPale)" stroke="#8ea0ae" stroke-width="1"/><path d="M9 1 L25 3 L25 5.5 L9 3.5 Z" fill="#aebfcc"/><path d="M0.5 5.5 L18.5 7.5 L18.5 23.5 L0.5 21.5 Z" fill="url(#gPale)" stroke="#8ea0ae" stroke-width="1"/><path d="M1 6 L18 8 L18 10.5 L1 8.5 Z" fill="#aebfcc"/></g><circle cx="1076" cy="344.6" r="12.8" fill="#a6cfa6"/><circle cx="1076" cy="344.6" r="12.200000000000001" fill="none" stroke="#8a8a8a" stroke-width="0.6" opacity="0.5"/><circle cx="1076" cy="344.6" r="10.8" fill="url(#gGreen)"/><path d="M1070 345.6 A6 6 0 0 1 1080 339.6" fill="none" stroke="#c8eec8" stroke-width="3"/><path d="M1078 335.6 L1084 340.6 L1077 343.6 Z" fill="#c8eec8"/><path d="M1082 343.6 A6 6 0 0 1 1072 349.6" fill="none" stroke="#c8eec8" stroke-width="3"/><path d="M1074 353.6 L1068 348.6 L1075 345.6 Z" fill="#c8eec8"/><circle cx="1118.7" cy="344.6" r="13.0" fill="#aebcd8"/><circle cx="1118.7" cy="344.6" r="12.4" fill="none" stroke="#8a8a8a" stroke-width="0.6" opacity="0.5"/><circle cx="1118.7" cy="344.6" r="11.0" fill="url(#gBlue)"/><path d="M1123.7 338.6 L1115.7 344.6 L1123.7 350.6 Z" fill="#d8e4f8"/><rect x="1112.7" y="338.6" width="3" height="12" fill="#d8e4f8"/><circle cx="1152.8" cy="344.6" r="13.0" fill="#aebcd8"/><circle cx="1152.8" cy="344.6" r="12.4" fill="none" stroke="#8a8a8a" stroke-width="0.6" opacity="0.5"/><circle cx="1152.8" cy="344.6" r="11.0" fill="url(#gBlue)"/><path d="M1147.8 338.6 L1155.8 344.6 L1147.8 350.6 Z" fill="#d8e4f8"/><rect x="1155.8" y="338.6" width="3" height="12" fill="#d8e4f8"/>
<circle cx="219.7" cy="685.8" r="12.8" fill="#a6cfa6"/><circle cx="219.7" cy="685.8" r="12.200000000000001" fill="none" stroke="#8a8a8a" stroke-width="0.6" opacity="0.5"/><circle cx="219.7" cy="685.8" r="10.8" fill="url(#gGreen)"/><path d="M212.2 685.8 L227.2 685.8 M219.7 678.3 L219.7 693.3" stroke="#bfe6bf" stroke-width="3.8"/><circle cx="254.3" cy="685.8" r="12.8" fill="#aebcd8"/><circle cx="254.3" cy="685.8" r="12.200000000000001" fill="none" stroke="#8a8a8a" stroke-width="0.6" opacity="0.5"/><circle cx="254.3" cy="685.8" r="10.8" fill="url(#gBlue)"/><path d="M252.60000000000002 693.3 V680.8" stroke="#c6daf6" stroke-width="2.9"/><path d="M252.60000000000002 681.9 H255.60000000000002 Q258.5 681.9 258.5 684.5999999999999 Q258.5 687.4 255.60000000000002 687.4 H252.60000000000002" fill="none" stroke="#c6daf6" stroke-width="2.4"/><circle cx="258.8" cy="690.0999999999999" r="3.7" fill="#cfe0f2" stroke="#7f9fc2" stroke-width="1"/><path d="M261.3 692.8 L266.8 698.5999999999999" stroke="#6a5a38" stroke-width="1.9" stroke-linecap="round"/><circle cx="288.2" cy="685.8" r="12.8" fill="#dca6a6"/><circle cx="288.2" cy="685.8" r="12.200000000000001" fill="none" stroke="#8a8a8a" stroke-width="0.6" opacity="0.5"/><circle cx="288.2" cy="685.8" r="10.8" fill="url(#gRed)"/><rect x="280.2" y="683.8" width="16" height="4" fill="#f8dada"/><circle cx="322.2" cy="685.8" r="12.8" fill="#dca6a6"/><circle cx="322.2" cy="685.8" r="12.200000000000001" fill="none" stroke="#8a8a8a" stroke-width="0.6" opacity="0.5"/><circle cx="322.2" cy="685.8" r="10.8" fill="url(#gRed)"/><rect x="314.2" y="683.8" width="16" height="4" fill="#f8dada"/><path d="M325.2 699.8 L325.2 689.3 L336.2 689.3" fill="#fff" stroke="#8a8a8a" stroke-width="1"/><rect x="325.7" y="689.8" width="10" height="10" fill="#fff"/><path d="M327.2 694.8 L330.2 697.8 L335.2 690.8" fill="none" stroke="#000" stroke-width="2.2"/><g transform="translate(346,668)"><path d="M20 5.5 Q20 4.5 21 4.5 L27 4.5 Q28 4.5 28 5.5 L28 12 L20 12 Z" fill="#3c3c3c"/><path d="M10 13 Q10 11.5 12 11.3 L29 10.8 Q32 11 32 14 L32 24 Q32 26 30 26 L12 26.5 Q9.5 26.5 9.5 24 Z" fill="url(#gPrn)"/><path d="M22 15 L31 14.5 L31 24.5 L22 25 Z" fill="#9a9a9a"/><path d="M23 16 L26 15.8 L26 24.5 L23 24.7 Z" fill="#e8e8e8"/><path d="M10.5 15 L22 14.5" stroke="#6a6a6a" stroke-width="0.8"/><path d="M5 24 L11 20.5 L21 21.5 L17 27.5 Z" fill="#b8dcdc" stroke="#2a2a2a" stroke-width="0.9"/></g><g transform="translate(345.8,668)"><path d="M41 13 L52 6.5 Q55 5.5 57 7.5 L59 10 L48 21 Z" fill="#15191e"/><path d="M50 21 L61 12 Q64 11 66 13.5 L67 17 L58 27.5 Z" fill="#15191e"/><path d="M52 15 L60 15 L58 20 L51 20 Z" fill="#0f1215"/><ellipse cx="45.5" cy="16.5" rx="5.5" ry="4.6" transform="rotate(-35 45.5 16.5)" fill="#222a32"/><ellipse cx="45.3" cy="16.8" rx="3.6" ry="3" transform="rotate(-35 45.3 16.8)" fill="#7a93a8"/><ellipse cx="45" cy="17.2" rx="2" ry="1.6" transform="rotate(-35 45 17.2)" fill="#2e3a46"/><ellipse cx="57" cy="23" rx="5.8" ry="4.8" transform="rotate(-35 57 23)" fill="#222a32"/><ellipse cx="56.8" cy="23.3" rx="3.8" ry="3.1" transform="rotate(-35 56.8 23.3)" fill="#7a93a8"/><ellipse cx="56.5" cy="23.7" rx="2.1" ry="1.7" transform="rotate(-35 56.5 23.7)" fill="#2e3a46"/></g><g transform="translate(420,672)"><rect x="0.5" y="0.5" width="25" height="24" fill="#e4eef7" stroke="#4a6e8c" stroke-width="1"/><rect x="0.5" y="0.5" width="25" height="2.5" fill="#5f9bd0"/><path d="M5.5 3 V24.5" stroke="#6d8aa4" stroke-width="0.9"/><path d="M0.5 7.3 H25.5" stroke="#6d8aa4" stroke-width="0.9"/><path d="M10.5 3 V24.5" stroke="#6d8aa4" stroke-width="0.9"/><path d="M0.5 11.6 H25.5" stroke="#6d8aa4" stroke-width="0.9"/><path d="M15.5 3 V24.5" stroke="#6d8aa4" stroke-width="0.9"/><path d="M0.5 15.899999999999999 H25.5" stroke="#6d8aa4" stroke-width="0.9"/><path d="M20.5 3 V24.5" stroke="#6d8aa4" stroke-width="0.9"/><path d="M0.5 20.2 H25.5" stroke="#6d8aa4" stroke-width="0.9"/><path d="M5 22 L8 12 Q10 9.5 12.5 10.5 L13 12 L13.5 10.5 Q16 9.5 18 12 L21 22 L15.5 22 L13 16 L10.5 22 Z" fill="#1e2630"/><circle cx="7.5" cy="22" r="3.4" fill="#231c5c"/><circle cx="18.5" cy="22" r="3.4" fill="#231c5c"/><circle cx="7.5" cy="22" r="1.3" fill="#6a62a8"/><circle cx="18.5" cy="22" r="1.3" fill="#6a62a8"/></g><g transform="translate(452.8,675)"><rect x="0" y="0" width="28" height="21" rx="1.5" fill="url(#gSigma)"/><path d="M10 3.5 L3 3.5 L7 10.5 L3 17.5 L10 17.5" fill="none" stroke="#dfe9d2" stroke-width="1.5"/><circle cx="6" cy="2" r="0.7" fill="#dfe9d2"/><circle cx="5" cy="19.3" r="0.7" fill="#dfe9d2"/><path d="M12 10.5 H26" stroke="#dfe9d2" stroke-width="1.2"/><text x="12.5" y="8.5" font-size="6.5" font-weight="bold" fill="#dfe9d2">x+s</text><text x="17" y="17.5" font-size="6.5" font-weight="bold" fill="#dfe9d2">3</text><rect x="1" y="21" width="26" height="1.5" fill="#c8c8c8"/></g><path d="M507.39 677.43 L509.40 677.78 L509.40 680.22 L507.39 680.57 L507.01 681.49 L508.18 683.16 L506.46 684.88 L504.79 683.71 L503.87 684.09 L503.52 686.10 L501.08 686.10 L500.73 684.09 L499.81 683.71 L498.14 684.88 L496.42 683.16 L497.59 681.49 L497.21 680.57 L495.20 680.22 L495.20 677.78 L497.21 677.43 L497.59 676.51 L496.42 674.84 L498.14 673.12 L499.81 674.29 L500.73 673.91 L501.08 671.90 L503.52 671.90 L503.87 673.91 L504.79 674.29 L506.46 673.12 L508.18 674.84 L507.01 676.51 Z" fill="url(#gSteel)" stroke="#1d3350" stroke-width="0.6"/><circle cx="502.3" cy="679" r="3.024" fill="#eef3f8"/><path d="M519.39 677.93 L521.40 678.28 L521.40 680.72 L519.39 681.07 L519.01 681.99 L520.18 683.66 L518.46 685.38 L516.79 684.21 L515.87 684.59 L515.52 686.60 L513.08 686.60 L512.73 684.59 L511.81 684.21 L510.14 685.38 L508.42 683.66 L509.59 681.99 L509.21 681.07 L507.20 680.72 L507.20 678.28 L509.21 677.93 L509.59 677.01 L508.42 675.34 L510.14 673.62 L511.81 674.79 L512.73 674.41 L513.08 672.40 L515.52 672.40 L515.87 674.41 L516.79 674.79 L518.46 673.62 L520.18 675.34 L519.01 677.01 Z" fill="url(#gSteel)" stroke="#1d3350" stroke-width="0.6"/><circle cx="514.3" cy="679.5" r="3.024" fill="#eef3f8"/><path d="M509.69 690.93 L511.70 691.28 L511.70 693.72 L509.69 694.07 L509.31 694.99 L510.48 696.66 L508.76 698.38 L507.09 697.21 L506.17 697.59 L505.82 699.60 L503.38 699.60 L503.03 697.59 L502.11 697.21 L500.44 698.38 L498.72 696.66 L499.89 694.99 L499.51 694.07 L497.50 693.72 L497.50 691.28 L499.51 690.93 L499.89 690.01 L498.72 688.34 L500.44 686.62 L502.11 687.79 L503.03 687.41 L503.38 685.40 L505.82 685.40 L506.17 687.41 L507.09 687.79 L508.76 686.62 L510.48 688.34 L509.31 690.01 Z" fill="url(#gSteel)" stroke="#1d3350" stroke-width="0.6"/><circle cx="504.6" cy="692.5" r="3.024" fill="#eef3f8"/><path d="M522.39 691.23 L524.40 691.58 L524.40 694.02 L522.39 694.37 L522.01 695.29 L523.18 696.96 L521.46 698.68 L519.79 697.51 L518.87 697.89 L518.52 699.90 L516.08 699.90 L515.73 697.89 L514.81 697.51 L513.14 698.68 L511.42 696.96 L512.59 695.29 L512.21 694.37 L510.20 694.02 L510.20 691.58 L512.21 691.23 L512.59 690.31 L511.42 688.64 L513.14 686.92 L514.81 688.09 L515.73 687.71 L516.08 685.70 L518.52 685.70 L518.87 687.71 L519.79 688.09 L521.46 686.92 L523.18 688.64 L522.01 690.31 Z" fill="url(#gSteel)" stroke="#1d3350" stroke-width="0.6"/><circle cx="517.3" cy="692.8" r="3.024" fill="#eef3f8"/><g transform="translate(540.5,672)"><path d="M1 1.5 Q1 0.5 2 0.5 L20.5 2.5 Q22 2.7 22 4 L22 18 L1 19.5 Z" fill="#ebebeb" stroke="#7f8a94" stroke-width="1"/><path d="M1.5 1.2 L21.5 3.3 L21.5 5.8 L1.5 4 Z" fill="#b4c0ca"/><path d="M16 4 H20" stroke="#5d6a76" stroke-width="0.9" stroke-dasharray="1 0.8"/><circle cx="16.5" cy="19" r="7.6" fill="#e8f2f8"/><path d="M16.5 19 L9.3 16.7 A7.5 7.5 0 0 1 23.8 17.3 Z" fill="#3fb2e6"/><path d="M16.5 19 L9.3 16.7 A7.5 7.5 0 0 0 16.5 26.5 Z" fill="#12942a"/><path d="M16.5 19 L23.8 17.3 A7.5 7.5 0 0 1 16.5 26.5 Z" fill="#d6141c"/></g><g transform="translate(0.0,0.0)"><path d="M583 681.5 L590.5 677.3 L596 681.8" fill="none" stroke="#3a3a3a" stroke-width="1.3"/><path d="M602.5 688.3 L609.8 684.2" fill="none" stroke="#3a3a3a" stroke-width="1.6"/><path d="M582.3 681.8 Q594 684 603.5 688.3 Q603.5 693.2 597 693 Q591.5 692.5 589.5 688.6 Q587.5 692.3 584.8 690.8 Q581.6 687.5 582.3 681.8 Z" fill="url(#gGlass)" stroke="#555" stroke-width="0.7"/></g><g transform="translate(624,677.6)"><circle cx="6" cy="7" r="6" fill="#4f9a58"/><path d="M1 9 Q4 13 9 12 L6 4 Z" fill="#5a8ac8"/><rect x="5" y="3" width="11" height="11" fill="#f4f4f4" stroke="#27405a" stroke-width="1"/><path d="M7 5.5 H14 M7 8 H14 M7 10.5 H14" stroke="#27405a" stroke-width="1.2"/><path d="M9 10 L15 10 L12 16 Z" fill="#7ac25a"/></g><g transform="translate(660.4,671.8)"><path d="M1 1 L22 5 L22 27 L1 24 Z" fill="#dedede" stroke="#1a1a1a" stroke-width="2"/><path d="M3 4.5 L8 5.5 L8 24 L3 23.5 Z" fill="#d01820"/><path d="M9 14 L14 15 L14 25 L9 24.5 Z" fill="#2a6cc8"/><path d="M15 11 L20 12 L20 25.5 L15 25 Z" fill="#1e9a30"/></g><g transform="translate(707,672)"><path d="M6 0.5 L19 0.5 L19 26.5 L0.5 26.5 L0.5 7 Z" fill="#eef6fb" stroke="#79b6dc" stroke-width="1.2"/><rect x="5" y="4" width="12" height="3.5" fill="#3d86c6"/><rect x="5" y="9" width="3.5" height="3.5" fill="#9bd37b"/><rect x="9" y="9" width="3.5" height="3.5" fill="#f2e24a"/><rect x="13" y="9" width="3.5" height="3.5" fill="#e8e8e8"/><rect x="5" y="13" width="3.5" height="3.5" fill="#88c86a"/><rect x="9" y="13" width="3.5" height="3.5" fill="#f0d040"/><rect x="13" y="13" width="3.5" height="3.5" fill="#c86a4a"/><rect x="5" y="17" width="3.5" height="3.5" fill="#c8c8c8"/><rect x="9" y="17" width="3.5" height="3.5" fill="#b84a3a"/><rect x="13" y="17" width="3.5" height="3.5" fill="#dadada"/><rect x="5" y="21" width="3.5" height="3.5" fill="#cfe6f4"/><rect x="9" y="21" width="3.5" height="3.5" fill="#e0e0e0"/><rect x="13" y="21" width="3.5" height="3.5" fill="#f0f0f0"/></g><g transform="translate(751.3,672)"><path d="M0 1 L17 1 L22 6 L22 27 L0 27 Z" fill="#111"/><rect x="4" y="2" width="12" height="8" fill="#9a9a9a"/><rect x="11" y="3" width="3" height="6" fill="#3a3a3a"/><rect x="3" y="13" width="16" height="12" fill="#e4e4e4"/></g><g transform="translate(792.5,673.5)"><path d="M8.5 0.5 L25.5 2.5 L25.5 17.5 L8.5 16 Z" fill="url(#gPale)" stroke="#8ea0ae" stroke-width="1"/><path d="M9 1 L25 3 L25 5.5 L9 3.5 Z" fill="#aebfcc"/><path d="M0.5 5.5 L18.5 7.5 L18.5 23.5 L0.5 21.5 Z" fill="url(#gPale)" stroke="#8ea0ae" stroke-width="1"/><path d="M1 6 L18 8 L18 10.5 L1 8.5 Z" fill="#aebfcc"/></g><circle cx="848.9" cy="685.4" r="12.8" fill="#a6cfa6"/><circle cx="848.9" cy="685.4" r="12.200000000000001" fill="none" stroke="#8a8a8a" stroke-width="0.6" opacity="0.5"/><circle cx="848.9" cy="685.4" r="10.8" fill="url(#gGreen)"/><path d="M842.9 686.4 A6 6 0 0 1 852.9 680.4" fill="none" stroke="#c8eec8" stroke-width="3"/><path d="M850.9 676.4 L856.9 681.4 L849.9 684.4 Z" fill="#c8eec8"/><path d="M854.9 684.4 A6 6 0 0 1 844.9 690.4" fill="none" stroke="#c8eec8" stroke-width="3"/><path d="M846.9 694.4 L840.9 689.4 L847.9 686.4 Z" fill="#c8eec8"/><circle cx="891.9" cy="685.6" r="13.0" fill="#aebcd8"/><circle cx="891.9" cy="685.6" r="12.4" fill="none" stroke="#8a8a8a" stroke-width="0.6" opacity="0.5"/><circle cx="891.9" cy="685.6" r="11.0" fill="url(#gBlue)"/><path d="M896.9 679.6 L888.9 685.6 L896.9 691.6 Z" fill="#d8e4f8"/><rect x="885.9" y="679.6" width="3" height="12" fill="#d8e4f8"/><circle cx="926" cy="685.6" r="13.0" fill="#aebcd8"/><circle cx="926" cy="685.6" r="12.4" fill="none" stroke="#8a8a8a" stroke-width="0.6" opacity="0.5"/><circle cx="926" cy="685.6" r="11.0" fill="url(#gBlue)"/><path d="M921 679.6 L929 685.6 L921 691.6 Z" fill="#d8e4f8"/><rect x="929" y="679.6" width="3" height="12" fill="#d8e4f8"/>
<rect x="431" y="327" width="36" height="34.5" fill="none" stroke="#c81e26" stroke-width="3.6"/>
<path d="M427 360 L386 415" stroke="#dc1a1a" stroke-width="3.2" stroke-linecap="round"/><path d="M373 434.5 L383 408.5 L387 414 L393.5 417.5 Z" fill="#e81414"/><path d="M427 360 L384 418" stroke="#000" stroke-width="4" opacity="0.08" transform="translate(2,2)"/></svg></body></html>
